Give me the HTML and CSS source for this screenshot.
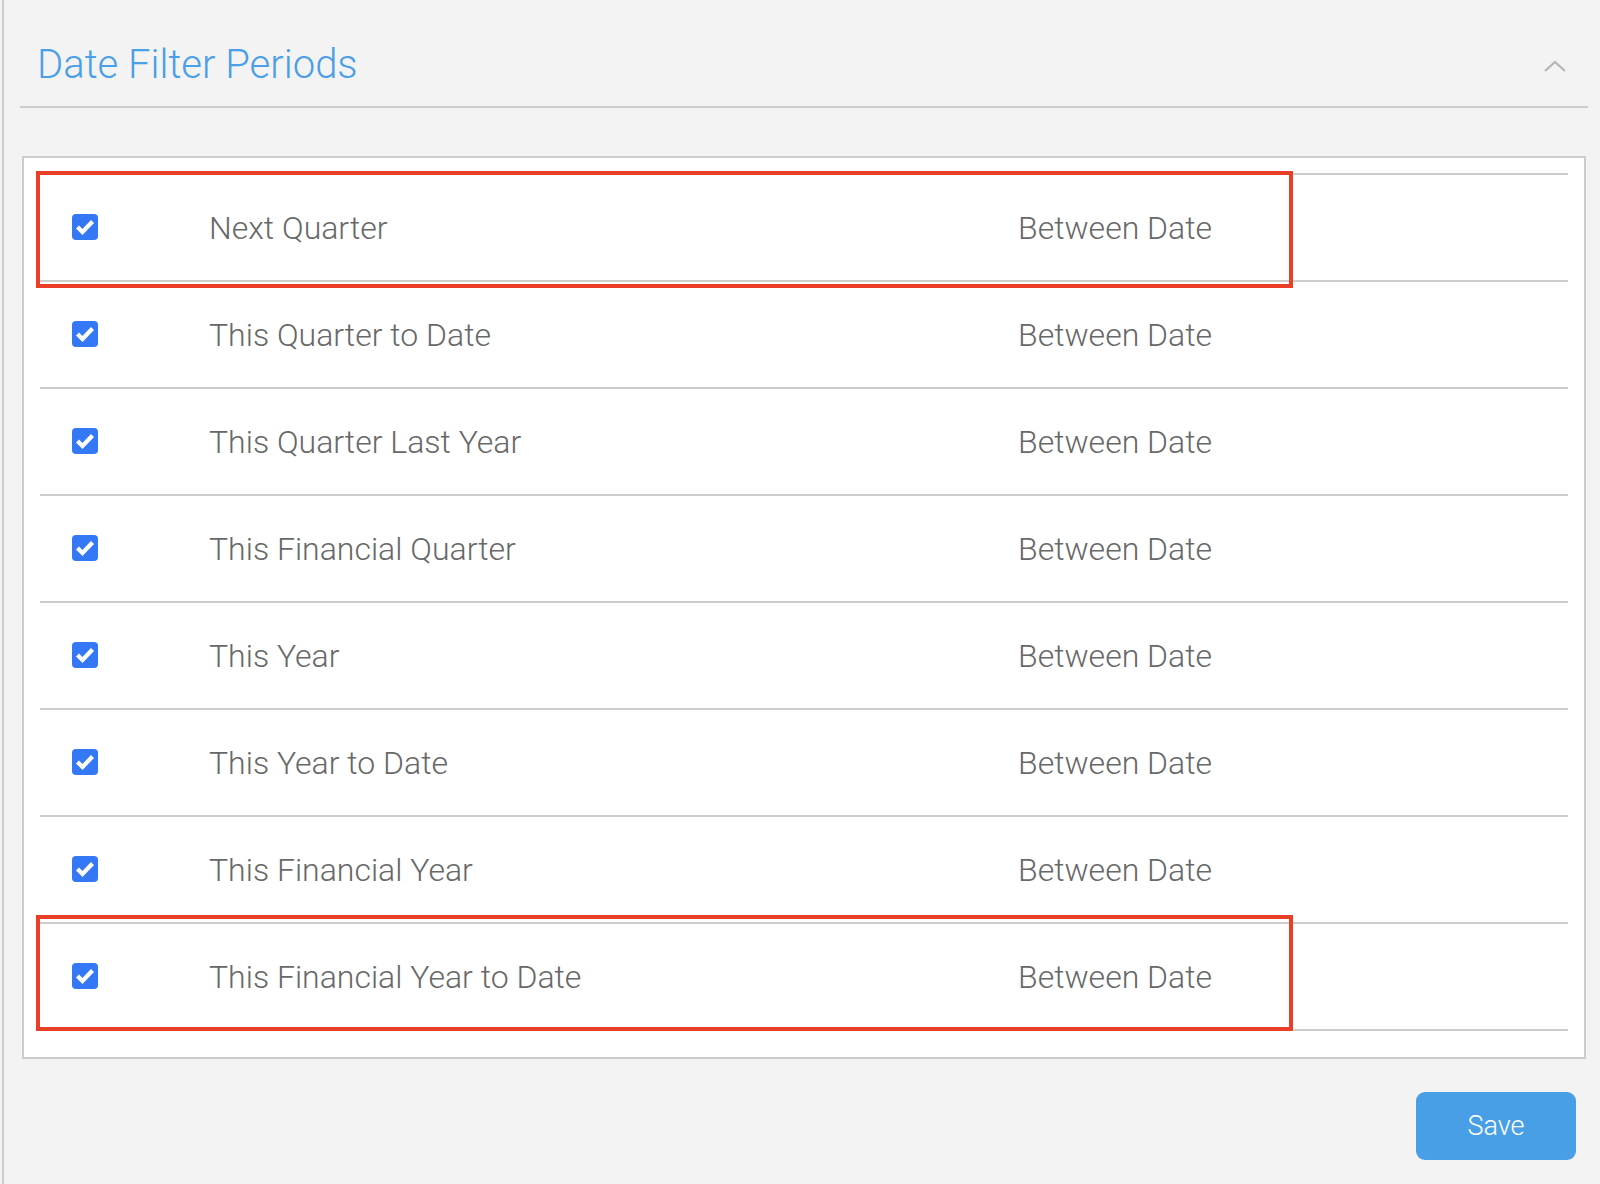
FILE: index.html
```html
<!DOCTYPE html>
<html lang="en">
<head>
<meta charset="utf-8">
<title>Date Filter Periods</title>
<link rel="stylesheet" href="styles.css">
</head>
<body>
<div class="panel">
  <div class="panel-header">
    <h2 class="panel-title">Date Filter Periods</h2>
    <svg class="chevron" width="24" height="14" viewBox="0 0 24 14" aria-hidden="true">
      <path d="M2 12 L12 3 L22 12" fill="none" stroke="#b5b5b5" stroke-width="2.2"/>
    </svg>
  </div>

  <div class="period-box">
    <div class="period-list">
      <div class="period-row">
        <span class="hl hl-first"></span>
        <span class="check"><svg viewBox="0 0 26 26" width="26" height="26"><path d="M5.5 13 L10.5 18 L20.5 7.5" fill="none" stroke="#fff" stroke-width="4.2"/></svg></span>
        <span class="period-name">Next Quarter</span>
        <span class="period-type">Between Date</span>
      </div>
      <div class="period-row">
        <span class="check"><svg viewBox="0 0 26 26" width="26" height="26"><path d="M5.5 13 L10.5 18 L20.5 7.5" fill="none" stroke="#fff" stroke-width="4.2"/></svg></span>
        <span class="period-name">This Quarter to Date</span>
        <span class="period-type">Between Date</span>
      </div>
      <div class="period-row">
        <span class="check"><svg viewBox="0 0 26 26" width="26" height="26"><path d="M5.5 13 L10.5 18 L20.5 7.5" fill="none" stroke="#fff" stroke-width="4.2"/></svg></span>
        <span class="period-name">This Quarter Last Year</span>
        <span class="period-type">Between Date</span>
      </div>
      <div class="period-row">
        <span class="check"><svg viewBox="0 0 26 26" width="26" height="26"><path d="M5.5 13 L10.5 18 L20.5 7.5" fill="none" stroke="#fff" stroke-width="4.2"/></svg></span>
        <span class="period-name">This Financial Quarter</span>
        <span class="period-type">Between Date</span>
      </div>
      <div class="period-row">
        <span class="check"><svg viewBox="0 0 26 26" width="26" height="26"><path d="M5.5 13 L10.5 18 L20.5 7.5" fill="none" stroke="#fff" stroke-width="4.2"/></svg></span>
        <span class="period-name">This Year</span>
        <span class="period-type">Between Date</span>
      </div>
      <div class="period-row">
        <span class="check"><svg viewBox="0 0 26 26" width="26" height="26"><path d="M5.5 13 L10.5 18 L20.5 7.5" fill="none" stroke="#fff" stroke-width="4.2"/></svg></span>
        <span class="period-name">This Year to Date</span>
        <span class="period-type">Between Date</span>
      </div>
      <div class="period-row">
        <span class="check"><svg viewBox="0 0 26 26" width="26" height="26"><path d="M5.5 13 L10.5 18 L20.5 7.5" fill="none" stroke="#fff" stroke-width="4.2"/></svg></span>
        <span class="period-name">This Financial Year</span>
        <span class="period-type">Between Date</span>
      </div>
      <div class="period-row">
        <span class="hl hl-last"></span>
        <span class="check"><svg viewBox="0 0 26 26" width="26" height="26"><path d="M5.5 13 L10.5 18 L20.5 7.5" fill="none" stroke="#fff" stroke-width="4.2"/></svg></span>
        <span class="period-name">This Financial Year to Date</span>
        <span class="period-type">Between Date</span>
      </div>
    </div>
  </div>

  <div class="actions">
    <button class="save-btn" type="button">Save</button>
  </div>
</div>
</body>
</html>
```

FILE: styles.css
```css
html, body {
  margin: 0;
  padding: 0;
}

body {
  background: #f3f3f3;
  font-family: Roboto, "Liberation Sans", sans-serif;
  width: 1600px;
  height: 1184px;
  overflow: hidden;
}

.panel {
  margin-left: 2px;
  border-left: 2px solid #cccccc;
  height: 1184px;
  box-sizing: border-box;
  padding: 0 12px 0 16px;
}

.panel-header {
  height: 106px;
  border-bottom: 2px solid #cccccc;
  display: flex;
  align-items: center;
  justify-content: space-between;
  padding: 0 21px 0 17px;
}

.panel-title {
  margin: 0;
  font-size: 40px;
  font-weight: 300;
  color: #4a9fe6;
  line-height: 1;
  padding-top: 24px;
}

.chevron {
  display: block;
  margin-top: 26px;
}

.period-box {
  margin: 48px 2px 0 2px;
  background: #ffffff;
  border: 2px solid #cccccc;
  padding: 15px 16px 26px 16px;
}

.period-list {
  border-top: 2px solid #cccccc;
}

.period-row {
  position: relative;
  height: 105px;
  border-bottom: 2px solid #cccccc;
  display: flex;
  align-items: center;
  color: #686868;
  font-size: 32px;
  font-weight: 300;
}

.check {
  width: 26px;
  height: 26px;
  margin-left: 32px;
  margin-top: -2px;
  border-radius: 4px;
  background: #3478f6;
  display: flex;
}

.check svg {
  display: block;
}

.period-name {
  margin-left: 111px;
  width: 809px;
}

.period-type {
  white-space: nowrap;
}

.hl {
  position: absolute;
  left: -4px;
  width: 1257px;
  border: 4px solid #ea3f26;
  box-sizing: border-box;
  pointer-events: none;
}

.hl-first {
  top: -4px;
  bottom: -8px;
}

.hl-last {
  top: -9px;
  bottom: -2px;
}

.actions {
  display: flex;
  justify-content: flex-end;
  padding: 33px 12px 0 0;
}

.save-btn {
  width: 160px;
  height: 68px;
  border: none;
  border-radius: 9px;
  background: #489fe6;
  color: #ffffff;
  font-family: Roboto, "Liberation Sans", sans-serif;
  font-size: 27px;
  font-weight: 300;
  padding: 0;
  cursor: pointer;
}
```
